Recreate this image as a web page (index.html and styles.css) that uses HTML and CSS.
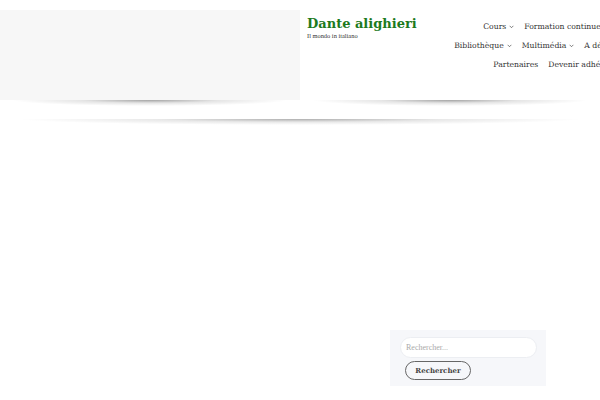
FILE: index.html
```html
<!DOCTYPE html>
<html lang="fr">
<head>
<meta charset="utf-8">
<title>Dante alighieri</title>
<link rel="stylesheet" href="styles.css">
</head>
<body>
<div class="page">
  <header class="top">
    <div class="top-left"></div>
    <div class="top-right">
      <div class="brand">
        <div class="site-title">Dante alighieri</div>
        <div class="site-desc">Il mondo in italiano</div>
      </div>
      <nav class="menu">
        <span class="item">Cours <svg class="chev" viewBox="0 0 8 5"><path d="M1 1l3 3 3-3" fill="none" stroke="currentColor" stroke-width="1"/></svg></span>
        <span class="item">Formation continue <svg class="chev" viewBox="0 0 8 5"><path d="M1 1l3 3 3-3" fill="none" stroke="currentColor" stroke-width="1"/></svg></span>
        <span class="item">Bibliothèque <svg class="chev" viewBox="0 0 8 5"><path d="M1 1l3 3 3-3" fill="none" stroke="currentColor" stroke-width="1"/></svg></span>
        <span class="item">Multimédia <svg class="chev" viewBox="0 0 8 5"><path d="M1 1l3 3 3-3" fill="none" stroke="currentColor" stroke-width="1"/></svg></span>
        <span class="item">A découvrir <svg class="chev" viewBox="0 0 8 5"><path d="M1 1l3 3 3-3" fill="none" stroke="currentColor" stroke-width="1"/></svg></span>
        <span class="item item-first-plain">Partenaires</span>
        <span class="item">Devenir adhérent</span>
      </nav>
    </div>
  </header>
  <div class="shadow-row first">
    <div class="shadow"></div>
    <div class="shadow"></div>
  </div>
  <div class="shadow-row second">
    <div class="shadow wide"></div>
  </div>
  <main class="content">
    <aside class="search-widget">
      <div class="search-input">Rechercher...</div>
      <div class="search-btn">Rechercher</div>
    </aside>
  </main>
</div>
</body>
</html>
```
FILE: styles.css
```css
html, body {
  margin: 0;
  padding: 0;
  background: #ffffff;
  overflow: hidden;
  width: 600px;
  height: 400px;
}
body {
  font-family: "DejaVu Serif", serif;
  color: #333;
}
.page {
  padding-top: 10px;
}
.top {
  display: flex;
  height: 90px;
}
.top-left {
  width: 300px;
  flex: none;
  background: #f7f7f7;
}
.top-right {
  width: 300px;
  flex: none;
  display: flex;
  background: #fff;
  padding: 6px 0 0 7px;
  box-sizing: border-box;
}
.brand {
  flex: none;
  width: 145px;
}
.site-title {
  font-family: "DejaVu Serif", serif;
  font-weight: bold;
  font-size: 13px;
  line-height: 16px;
  color: #1d7a1d;
  white-space: nowrap;
}
.site-desc {
  font-family: "Liberation Serif", serif;
  font-size: 6.4px;
  line-height: 7px;
  color: #333;
  white-space: nowrap;
}
.menu {
  flex: none;
  width: 188px;
  align-self: flex-start;
  display: flex;
  flex-wrap: wrap;
  justify-content: center;
  column-gap: 10px;
  padding-top: 1px;
}
.item {
  font-size: 7.7px;
  line-height: 19px;
  color: #333;
  white-space: nowrap;
  display: flex;
  align-items: center;
  gap: 3px;
}
.item-first-plain {
  margin-left: 18px;
}
.chev {
  width: 5px;
  height: 3.5px;
}
.shadow-row {
  display: flex;
  height: 6px;
}
.shadow-row.second {
  margin-top: 13px;
}
.shadow {
  flex: 1;
  background: radial-gradient(ellipse 46% 100% at 50% 0%, rgba(0,0,0,0.36), rgba(0,0,0,0.1) 50%, rgba(0,0,0,0) 100%);
}
.shadow.wide {
  background: radial-gradient(ellipse 47% 100% at 50% 0%, rgba(0,0,0,0.32), rgba(0,0,0,0.09) 50%, rgba(0,0,0,0) 100%);
}
.content {
  display: flex;
  justify-content: flex-end;
  padding-right: 54px;
  padding-top: 205px;
}
.search-widget {
  width: 156px;
  height: 56px;
  box-sizing: border-box;
  background: #f6f7fa;
  padding: 7px 9px 0 10px;
}
.search-input {
  height: 21px;
  box-sizing: border-box;
  border: 1px solid #eceef2;
  border-radius: 11px;
  background: #fff;
  font-family: "Liberation Serif", serif;
  font-size: 8px;
  color: #aaa;
  line-height: 19px;
  padding-left: 5px;
}
.search-btn {
  margin: 3px 0 0 5px;
  width: 66px;
  height: 19px;
  box-sizing: border-box;
  border: 1px solid #666;
  border-radius: 10px;
  font-family: "DejaVu Serif", serif;
  font-weight: bold;
  font-size: 7px;
  color: #444;
  display: flex;
  align-items: center;
  justify-content: center;
}
```
